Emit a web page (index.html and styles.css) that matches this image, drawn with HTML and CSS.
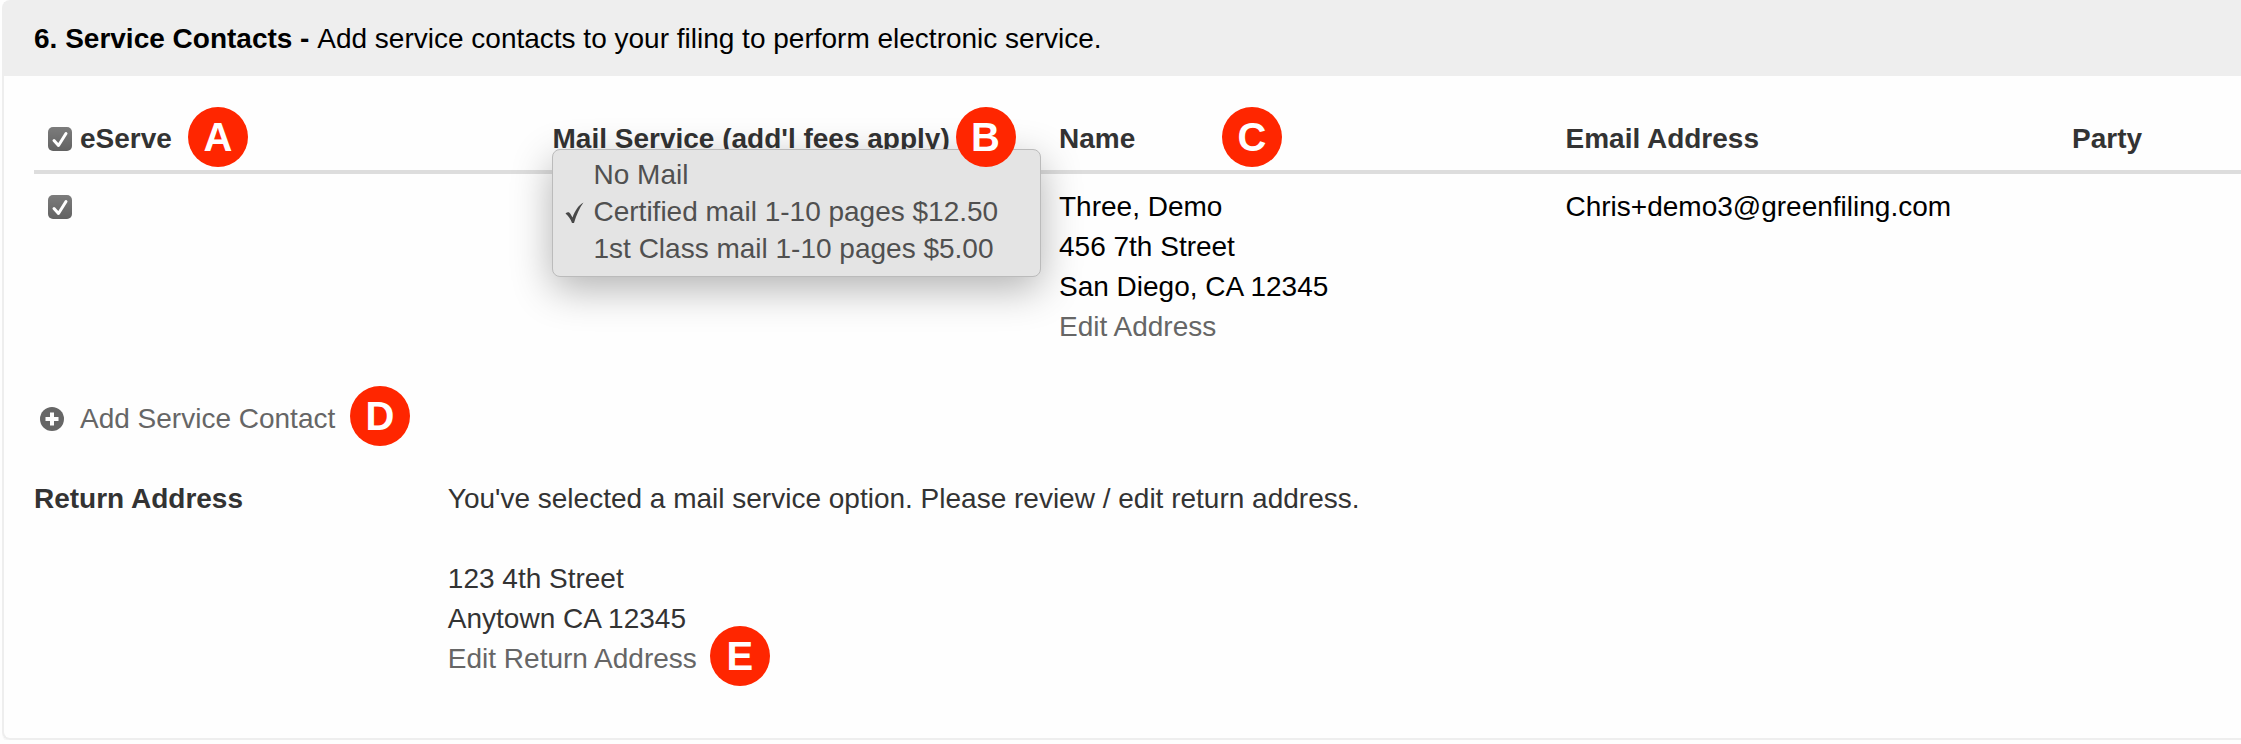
FILE: index.html
```html
<!DOCTYPE html>
<html lang="en">
<head>
    <meta charset="UTF-8">
    <meta name="viewport" content="width=device-width, initial-scale=1.0">
    <title>Service Contacts</title>
    <link rel="stylesheet" href="styles.css">
</head>
<body>
    <section class="panel">
        <h2 class="panel-heading">6. Service Contacts - <span>Add service contacts to your filing to perform electronic service.</span></h2>

        <div class="panel-body">
            <table class="contacts">
                <colgroup>
                    <col class="col-main">
                    <col class="col-main">
                    <col class="col-main">
                    <col class="col-main">
                    <col>
                </colgroup>
                <thead>
                    <tr>
                        <th scope="col">
                            <div class="check-row">
                                <input type="checkbox" class="check" id="eserveAll" checked>
                                <label for="eserveAll">eServe</label>
                            </div>
                            <span class="badge badge-a">A</span>
                        </th>
                        <th scope="col">Mail Service (add'l fees apply)<span class="badge badge-b">B</span></th>
                        <th scope="col">Name<span class="badge badge-c">C</span></th>
                        <th scope="col">Email Address</th>
                        <th scope="col">Party</th>
                    </tr>
                </thead>
                <tbody>
                    <tr>
                        <td>
                            <div class="check-row">
                                <input type="checkbox" class="check" aria-label="eServe Three, Demo" checked>
                            </div>
                        </td>
                        <td>
                            <select class="mail-menu" size="3" aria-label="Mail Service">
                                <option>No Mail</option>
                                <option selected>Certified mail 1-10 pages $12.50</option>
                                <option>1st Class mail 1-10 pages $5.00</option>
                            </select>
                        </td>
                        <td>
                            Three, Demo<br>
                            456 7th Street<br>
                            San Diego, CA 12345<br>
                            <a href="#" class="link">Edit Address</a>
                        </td>
                        <td>Chris+demo3@greenfiling.com</td>
                        <td></td>
                    </tr>
                </tbody>
            </table>

            <div class="add-contact">
                <a href="#" class="link add-link">
                    <svg class="icon-plus" viewBox="0 0 24 24" aria-hidden="true">
                        <circle cx="12" cy="12" r="12" fill="currentColor"/>
                        <path d="M12 5.5v13M5.5 12h13" stroke="#fefefe" stroke-width="4"/>
                    </svg>
                    Add Service Contact
                </a>
                <span class="badge badge-d">D</span>
            </div>

            <div class="return-address">
                <strong>Return Address</strong>
                <div>
                    <p class="notice">You've selected a mail service option. Please review / edit return address.</p>
                    <div>123 4th Street</div>
                    <div>Anytown CA 12345</div>
                    <div class="edit-return">
                        <a href="#" class="link">Edit Return Address</a>
                        <span class="badge badge-e">E</span>
                    </div>
                </div>
            </div>
        </div>
    </section>
</body>
</html>
```

FILE: styles.css
```css
body {
    margin: 0;
    background: #fefefe;
    color: #333;
    font-family: "Liberation Sans", Arial, sans-serif;
    font-size: 28px;
    line-height: 40px;
}

.panel {
    margin-left: 2px;
    border: 2px solid #eee;
    border-right: none;
    border-radius: 8px 0 0 8px;
    box-shadow: 0 2px 0 #f7f7f7;
}

.panel-heading {
    margin: 0;
    padding: 17px 30px;
    background: #eee;
    color: #000;
    font-size: 28px;
    font-weight: bold;
}

.panel-heading span {
    font-weight: normal;
}

.panel-body {
    padding: 31px 0 59px 30px;
}

/* contacts table */
.contacts {
    width: 100%;
    table-layout: fixed;
    border-collapse: separate;
    border-spacing: 0;
}

.col-main {
    width: 22.95%;
}

.contacts th,
.contacts td {
    position: relative;
    padding: 12px;
    text-align: left;
    vertical-align: top;
}

.contacts th {
    padding-bottom: 11px;
    border-bottom: 4px solid #ddd;
}

.contacts td {
    padding-top: 13px;
    color: #000;
}

.check-row {
    display: flex;
    align-items: center;
    gap: 8px;
    height: 40px;
    padding-left: 2px;
}

.check {
    appearance: none;
    width: 24px;
    height: 24px;
    margin: 0;
    border-radius: 5px;
    background: url("data:image/svg+xml,%3Csvg xmlns='http://www.w3.org/2000/svg' viewBox='0 0 24 24'%3E%3Cpath d='M6 13.5l4.5 5L18 6.5' fill='none' stroke='white' stroke-width='3' stroke-linecap='round' stroke-linejoin='round'/%3E%3C/svg%3E"), linear-gradient(#7c7c7c, #626262);
}

/* open mail service list */
.mail-menu {
    appearance: none;
    position: absolute;
    top: -25px;
    left: 11px;
    z-index: 1;
    box-sizing: border-box;
    width: 489px;
    height: 128px;
    margin: 0;
    padding: 9px 0 6px;
    overflow: hidden;
    border: 1px solid #bbb;
    border-radius: 8px;
    outline: none;
    background: #e4e4e4;
    box-shadow: 0 12px 40px rgba(0, 0, 0, 0.3);
    font: inherit;
}

.mail-menu option {
    min-height: 37px;
    padding: 0 0 0 41px;
    line-height: 37px;
    -webkit-text-fill-color: #505050;
}

.mail-menu option:checked {
    background-image: url("data:image/svg+xml,%3Csvg xmlns='http://www.w3.org/2000/svg' width='40' height='37' viewBox='0 0 40 37'%3E%3Cpath d='M12.500 17.500c2-1.800 3.800-1.800 5 .5l2 3.500C22 15 25 9.500 30.500 6.500c-4 5.500-7 12-9.500 20.500h-2c-1.500-4-3-6.500-6.500-9.500z' fill='%23484848'/%3E%3C/svg%3E"), linear-gradient(#e4e4e4, #e4e4e4);
    background-repeat: no-repeat, repeat;
}

.link {
    color: #666;
    text-decoration: none;
}

.add-contact {
    position: relative;
    margin-top: 40px;
}

.add-link {
    display: inline-flex;
    align-items: center;
    gap: 16px;
    padding-left: 6px;
    vertical-align: top;
}

.icon-plus {
    width: 24px;
    height: 24px;
}

.return-address {
    display: grid;
    grid-template-columns: 18.75% 1fr;
    margin-top: 40px;
}

.notice {
    margin: 0 0 40px;
}

.edit-return {
    position: relative;
}

/* callout markers */
.badge {
    position: absolute;
    top: -13px;
    z-index: 2;
    width: 60px;
    height: 60px;
    border-radius: 50%;
    background: #ff2600;
    color: #fff;
    font-size: 40px;
    font-weight: bold;
    line-height: 60px;
    text-align: center;
}

.contacts .badge {
    top: 0;
}

.badge-a {
    left: 154px;
}

.badge-b {
    left: 415px;
}

.badge-c {
    left: 175px;
}

.badge-d {
    left: 316px;
}

.badge-e {
    left: 262px;
}
```
